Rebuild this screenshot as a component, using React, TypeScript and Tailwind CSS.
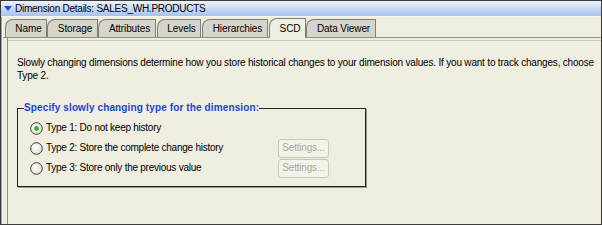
import React from "react";

const tabs = [
  { label: "Name", w: "w-[42px]", ml: "ml-[2px]" },
  { label: "Storage", w: "w-[51px]", ml: "ml-0" },
  { label: "Attributes", w: "w-[58px]", ml: "ml-0" },
  { label: "Levels", w: "w-[44px]", ml: "ml-px" },
  { label: "Hierarchies", w: "w-[66px]", ml: "ml-px" },
  { label: "SCD", w: "w-[37px]", ml: "ml-px", active: true },
  { label: "Data Viewer", w: "w-[70px]", ml: "ml-0" },
];

function Radio({ checked }: { checked?: boolean }) {
  return (
    <svg width="13" height="13" viewBox="0 0 13 13" className="shrink-0">
      <defs>
        <radialGradient id="rg" cx="0.4" cy="0.4" r="0.7">
          <stop offset="0" stopColor="#ffffff" />
          <stop offset="1" stopColor="#dcdcd4" />
        </radialGradient>
      </defs>
      <circle cx="6.5" cy="6.5" r="5.8" fill="url(#rg)" stroke="#2b2b2b" strokeWidth="0.9" />
      {checked && <circle cx="6.5" cy="6.5" r="2.4" fill="#3cb021" />}
    </svg>
  );
}

function SettingsBtn() {
  return (
    <div className="w-[51px] h-[19px] border border-[#c9c7ba] rounded-[3px] bg-[#f4f3ea] text-[#a9a89c] flex items-center justify-center text-[10px] tracking-[-0.2px]">
      Settings...
    </div>
  );
}

export default function App() {
  return (
    <div className="w-[602px] h-[225px] border border-[#3c3c3c] bg-[#efeee0] overflow-hidden flex flex-col font-['Liberation_Sans',Arial,sans-serif] text-[10px] text-black leading-none">
      <div className="h-[16px] shrink-0 bg-gradient-to-b from-[#eef3fc] to-[#a7c2ee] flex items-center border-b border-[#f6f6f0]">
        <svg width="9" height="6" viewBox="0 0 9 6" className="ml-[3px] mr-[2px]">
          <polygon points="0,0 8,0 4,5" fill="#1f4fc8" />
        </svg>
        <span className="tracking-[-0.25px]">Dimension Details: SALES_WH.PRODUCTS</span>
      </div>
      <div className="flex-1 flex">
        <div className="w-[2px] border-l border-[#a0a096] bg-[#f6f5ec] shrink-0" />
        <div className="flex-1 flex flex-col">
          <div className="h-[21px] shrink-0 flex items-end border-b border-[#8f8f86] relative">
            {tabs.map((t) => (
              <div
                key={t.label}
                className={`${t.w} ${t.ml} shrink-0 border border-b-0 border-[#7f7f78] rounded-tl-[8px] flex items-center justify-center pl-[5px] ${
                  t.active
                    ? "h-[20px] bg-[#efeee0] -mb-px relative z-10"
                    : "h-[18px] bg-[#d6d4cb]"
                }`}
              >
                <span className="tracking-[-0.1px]">{t.label}</span>
              </div>
            ))}
          </div>
          <div className="flex-1 flex">
            <div className="w-[5px] shrink-0 border-r border-[#8f8f86]" />
            <div className="flex-1 flex flex-col border-t border-[#c8c7bb] mt-[2px]">
              <div className="pl-[9px] pt-[15px] pr-0 leading-[13px] tracking-[-0.19px]">
                <div className="whitespace-nowrap">
                  Slowly changing dimensions determine how you store historical changes to your dimension values. If you want to track changes, choose
                </div>
                <div>Type 2.</div>
              </div>
              <fieldset className="ml-[9px] mt-[20px] w-[349px] h-[85px] border border-[#222] shadow-[1px_1px_0_#9a9a90] px-[12px] pt-0 pb-0 relative">
                <legend className="font-bold text-[#1c46c8] px-0 ml-[-6px] leading-[12px] text-[10px] tracking-[0.12px]">
                  Specify slowly changing type for the dimension:
                </legend>
                <div className="flex flex-col mt-[4px] tracking-[-0.25px]">
                  <div className="h-[20px] flex items-center gap-[3px]">
                    <Radio checked />
                    <span>Type 1: Do not keep history</span>
                  </div>
                  <div className="h-[20px] flex items-center gap-[3px]">
                    <Radio />
                    <span className="w-[229px]">Type 2: Store the complete change history</span>
                    <SettingsBtn />
                  </div>
                  <div className="h-[20px] flex items-center gap-[3px]">
                    <Radio />
                    <span className="w-[229px]">Type 3: Store only the previous value</span>
                    <SettingsBtn />
                  </div>
                </div>
              </fieldset>
            </div>
          </div>
        </div>
      </div>
    </div>
  );
}
